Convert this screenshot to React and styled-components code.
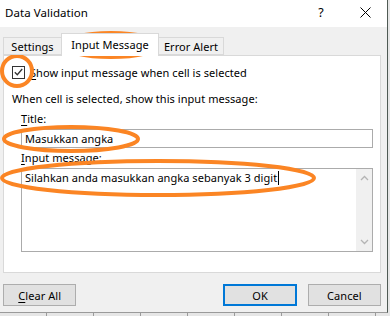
import React from "react";
import styled, { createGlobalStyle } from "styled-components";

const Global = createGlobalStyle`
  html, body {
    margin: 0;
    padding: 0;
    background: #dcdcdc;
  }
  body {
    font-family: "Noto Sans", "Open Sans", sans-serif;
    font-size: 11px;
    letter-spacing: 0.05px;
    color: #000;
  }
`;

const Screen = styled.div`
  position: relative;
  width: 390px;
  height: 316px;
  overflow: hidden;
  background: repeating-linear-gradient(
    90deg,
    #e6e6e6 0,
    #e6e6e6 46px,
    #9a9a9a 46px,
    #9a9a9a 47px
  );
`;

const Window = styled.div`
  width: 387px;
  height: 312px;
  background: #f0f0f0;
  border-right: 1px solid #4f5a54;
  border-bottom: 1px solid #9a9a9a;
  display: flex;
  flex-direction: column;
`;

const TitleBar = styled.div`
  height: 27px;
  background: #fff;
  display: flex;
  align-items: center;
  padding-left: 5px;
  flex-shrink: 0;
`;

const Caption = styled.div`
  flex: 1;
  font-size: 11.5px;
  margin-top: -3px;
`;

const Help = styled.div`
  width: 12px;
  margin-right: 33px;
  margin-top: -3px;
  font-size: 12.5px;
  text-align: center;
`;

const Close = styled.div`
  width: 11px;
  margin-right: 16px;
  margin-top: -3px;
  display: flex;
`;

const Body = styled.div`
  padding: 0 6px 0 3px;
  display: flex;
  flex-direction: column;
`;

const Tabs = styled.div`
  display: flex;
  align-items: flex-end;
  height: 28px;
  position: relative;
  z-index: 1;
`;

const Tab = styled.div`
  width: ${(p) => p.$w}px;
  height: ${(p) => (p.$active ? "23px" : "18px")};
  box-sizing: border-box;
  border: 1px solid #d9d9d9;
  border-bottom: ${(p) => (p.$active ? "none" : "1px solid #d9d9d9")};
  margin-left: ${(p) => (p.$active ? "-1px" : "0")};
  margin-right: ${(p) => (p.$active ? "-1px" : "0")};
  margin-bottom: ${(p) => (p.$active ? "-1px" : "0")};
  background: ${(p) => (p.$active ? "#fff" : "#f0f0f0")};
  display: flex;
  justify-content: center;
  align-items: ${(p) => (p.$active ? "flex-start" : "center")};
  padding-top: ${(p) => (p.$active ? "3px" : "0")};
  position: relative;
  z-index: ${(p) => (p.$active ? 2 : 1)};
  white-space: nowrap;
`;

const Panel = styled.div`
  height: 218px;
  box-sizing: border-box;
  background: #fff;
  border: 1px solid #d9d9d9;
  padding: 9px 7px 0 8px;
  display: flex;
  flex-direction: column;
`;

const CheckRow = styled.label`
  display: flex;
  align-items: center;
  gap: 5px;
  height: 14px;
`;

const Box = styled.span`
  width: 13px;
  height: 13px;
  box-sizing: border-box;
  border: 1px solid #333;
  background: #fff;
  display: flex;
  align-items: center;
  justify-content: center;
`;

const Group = styled.div`
  margin-top: 12px;
  display: flex;
  flex-direction: column;
`;

const Label = styled.div`
  height: 16px;
  line-height: 16px;
  padding-left: ${(p) => p.$indent || 0}px;
  margin-top: ${(p) => p.$top || 0}px;
  white-space: nowrap;
`;

const Field = styled.div`
  margin-left: 9px;
  width: 352px;
  height: ${(p) => p.$h}px;
  box-sizing: border-box;
  border: 1px solid #ababab;
  background: #fff;
  display: flex;
  align-items: flex-start;
  margin-top: ${(p) => p.$top || 0}px;
`;

const FieldText = styled.div`
  flex: 1;
  padding: 1px 3px;
  line-height: 16px;
  white-space: nowrap;
  display: flex;
  align-items: center;
`;

const Caret = styled.span`
  width: 1px;
  height: 14px;
  background: #000;
  margin-left: 1px;
`;

const Scrollbar = styled.div`
  width: 16px;
  align-self: stretch;
  background: #f0f0f0;
  display: flex;
  flex-direction: column;
  justify-content: space-between;
  align-items: center;
  padding: 6px 0;
`;

const Footer = styled.div`
  display: flex;
  align-items: center;
  padding-top: 11px;
`;

const Button = styled.div`
  width: 74px;
  height: 22px;
  box-sizing: border-box;
  background: #e1e1e1;
  border: ${(p) => (p.$default ? "2px solid #0078d7" : "1px solid #adadad")};
  display: flex;
  align-items: center;
  justify-content: center;
  margin-left: ${(p) => p.$gap || 0}px;
`;

const U = styled.span`
  text-decoration: underline;
  text-underline-offset: 2px;
`;

const Overlay = styled.svg`
  position: absolute;
  left: 0;
  top: 0;
  pointer-events: none;
`;

const Chevron = ({ up }) => (
  <svg width="9" height="6" viewBox="0 0 9 6">
    <path
      d={up ? "M1 5 L4.5 1.5 L8 5" : "M1 1 L4.5 4.5 L8 1"}
      fill="none"
      stroke="#b4b4b4"
      strokeWidth="1.3"
    />
  </svg>
);

export default function App() {
  return (
    <>
      <Global />
      <Screen>
        <Window>
          <TitleBar>
            <Caption>Data Validation</Caption>
            <Help>?</Help>
            <Close>
              <svg width="11" height="11" viewBox="0 0 11 11">
                <path d="M0.5 0.5 L10.5 10.5 M10.5 0.5 L0.5 10.5" stroke="#000" strokeWidth="1" />
              </svg>
            </Close>
          </TitleBar>
          <Body>
            <Tabs>
              <Tab $w={59}>Settings</Tab>
              <Tab $w={98} $active>Input Message</Tab>
              <Tab $w={66}>Error Alert</Tab>
            </Tabs>
            <Panel>
              <CheckRow>
                <Box>
                  <svg width="9" height="8" viewBox="0 0 9 8">
                    <path d="M0.8 4.2 L3.3 6.7 L8.2 1" fill="none" stroke="#333" strokeWidth="1.3" />
                  </svg>
                </Box>
                <span>
                  <U>S</U>how input message when cell is selected
                </span>
              </CheckRow>
              <Group>
                <Label>When cell is selected, show this input message:</Label>
                <Label $indent={9} $top={4}>
                  <U>T</U>itle:
                </Label>
                <Field $h={19} $top={2}>
                  <FieldText>Masukkan angka</FieldText>
                </Field>
                <Label $indent={9} $top={2}>
                  <U>I</U>nput message:
                </Label>
                <Field $h={84} $top={2}>
                  <FieldText>
                    Silahkan anda masukkan angka sebanyak 3 digit
                    <Caret />
                  </FieldText>
                  <Scrollbar>
                    <Chevron up />
                    <Chevron />
                  </Scrollbar>
                </Field>
              </Group>
            </Panel>
            <Footer>
              <Button>
                <U>C</U>lear All
              </Button>
              <Button $default $gap={147}>OK</Button>
              <Button $gap={11}>Cancel</Button>
            </Footer>
          </Body>
        </Window>
        <Overlay width="390" height="316" viewBox="0 0 390 316">
          <g fill="none" stroke="#fb8524" strokeWidth="4">
            <ellipse cx="111" cy="45" rx="48" ry="12" />
            <circle cx="17" cy="71" r="15" />
            <ellipse cx="71" cy="139" rx="67" ry="12" />
            <ellipse cx="158" cy="178" rx="156" ry="17" />
          </g>
        </Overlay>
      </Screen>
    </>
  );
}
